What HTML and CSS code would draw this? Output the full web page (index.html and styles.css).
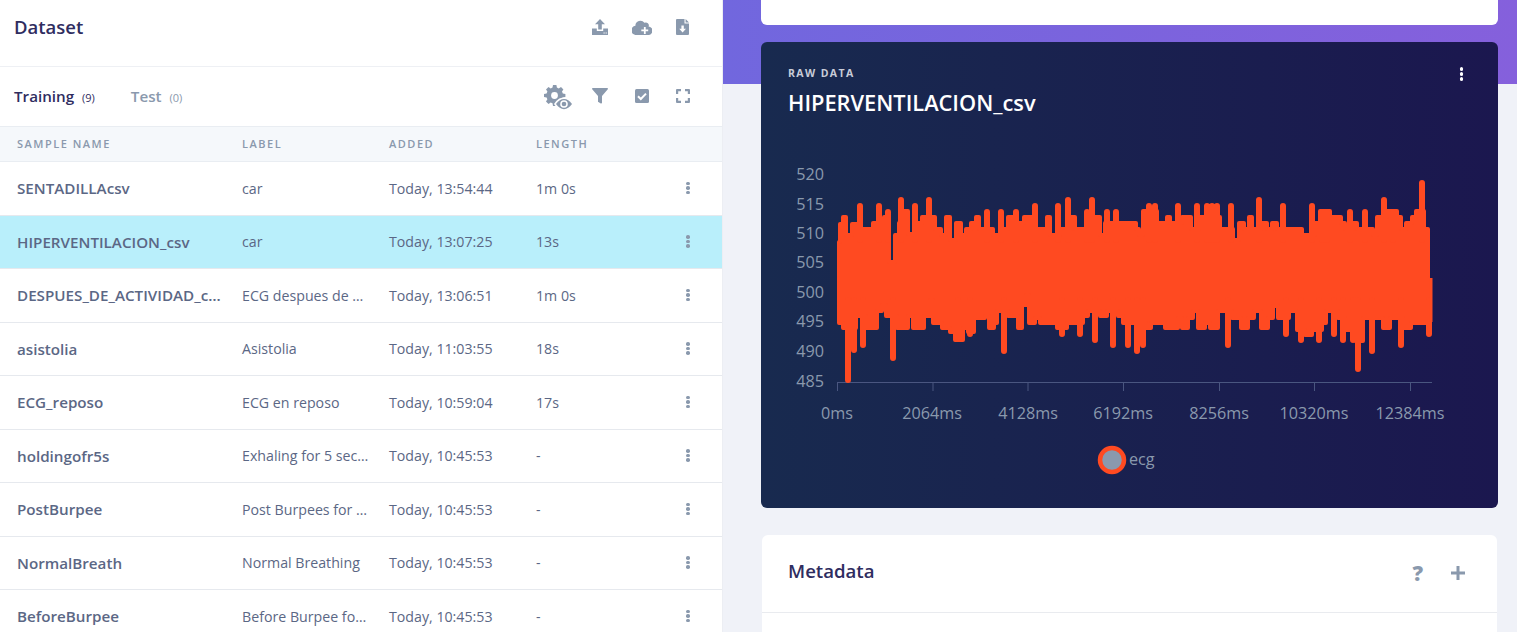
FILE: index.html
```html
<!DOCTYPE html>
<html lang="en">
<head>
    <meta charset="UTF-8">
    <title>Data acquisition</title>
    <link rel="stylesheet" href="styles.css">
</head>
<body>
<div class="page">
    <section class="dataset">
        <header class="dataset_head">
            <h2 class="dataset_title">Dataset</h2>
            <div class="tools">
                <span class="tool"><svg width="16" height="16" viewBox="0 0 16 16"><path d="M8 0l5 5.2H9.8v5.3H6.2V5.2H3zM0 9.5h4.8v2.5h6.4V9.5H16V16H0z"/><path class="hole" d="M11.5 13.6h1.2v.9h-1.2zM13.6 13.6h1.2v.9h-1.2z"/></svg></span>
                <span class="tool"><svg width="20" height="15" viewBox="0 0 20 15"><path d="M16.6 6.6A3 3 0 0 0 12.4 2.8 5 5 0 0 0 3.4 5.8 4.6 4.6 0 0 0 4.6 15h11.4a4.2 4.2 0 0 0 .6-8.4z"/><path class="hole" d="M11.900 7h1.800v2.600h2.500v1.700h-2.500V14h-1.800v-2.700H9.300V9.600h2.600z"/></svg></span>
                <span class="tool"><svg width="14" height="16" viewBox="0 0 14 16"><path d="M1 0h7.500v4.600H13V15a1 1 0 0 1-1 1H1a1 1 0 0 1-1-1V1a1 1 0 0 1 1-1zM9.600 0L13 3.500H9.600z"/><path class="hole" d="M5.400 6.500h2.400v3.300h2.200L6.600 13.400 3.200 9.800h2.200z"/></svg></span>
            </div>
        </header>
        <div class="tabs_row">
            <div class="tabs">
                <span class="tab tab_on">Training <small>(9)</small></span>
                <span class="tab">Test <small>(0)</small></span>
            </div>
            <div class="tools">
                <span class="tool"><svg class="cog_eye" width="30" height="26" viewBox="0 0 30 26"><path d="M8 0h3.400l.5 2.600 1.800.8L16 2l2.400 2.400-1.400 2.200.8 1.800 2.600.5V12l-2.600.5-.8 1.800 1.400 2.200-2.400 2.400-2.200-1.400-1.800.8-.5 2.600H8l-.5-2.600-1.800-.8-2.200 1.400L1 16.500l1.400-2.200-.8-1.800L-1 12V8.900l2.600-.5.8-1.800L1 4.400 3.500 2l2.200 1.400 1.800-.8z" transform="translate(1)"/><circle class="hole" cx="10.500" cy="10.500" r="3.400"/><path class="hole" d="M10 19c3-4.500 6-6.500 10-6.500s7 2 10 6.500c-3 4.500-6 6.800-10 6.800S13 23.500 10 19z"/><path d="M12 19c2.500-3.300 5-5 8-5s5.500 1.700 8 5c-2.500 3.300-5 5.200-8 5.200s-5.500-1.900-8-5.200z"/><circle class="hole" cx="20" cy="19" r="3.800"/><circle cx="20" cy="19" r="2.300"/></svg></span>
                <span class="tool"><svg width="16" height="16" viewBox="0 0 16 16"><path d="M.8 0h14.400c.7 0 1 .8.6 1.300L10 8v6.800c0 .6-.6 1-1.200.7l-2.400-1.400a.8.8 0 0 1-.4-.7V8L.2 1.300C-.2.800.1 0 .8 0z"/></svg></span>
                <span class="tool"><svg width="14" height="14" viewBox="0 0 14 14"><rect width="14" height="14" rx="1.500"/><path class="hole_line" d="M3 7.200l2.800 2.800L11 4.600"/></svg></span>
                <span class="tool"><svg width="14" height="14" viewBox="0 0 14 14"><path d="M0 5V1a1 1 0 0 1 1-1h4v2.200H2.200V5zM9 0h4a1 1 0 0 1 1 1v4h-2.200V2.200H9zM14 9v4a1 1 0 0 1-1 1H9v-2.200h2.800V9zM5 14H1a1 1 0 0 1-1-1V9h2.200v2.800H5z"/></svg></span>
            </div>
        </div>
        <table class="samples">
            <thead>
                <tr><th>Sample name</th><th>Label</th><th>Added</th><th>Length</th><th></th></tr>
            </thead>
            <tbody>
                <tr><td class="name">SENTADILLAcsv</td><td>car</td><td>Today, 13:54:44</td><td>1m 0s</td><td class="more"><i></i><i></i><i></i></td></tr>
                <tr class="selected"><td class="name">HIPERVENTILACION_csv</td><td>car</td><td>Today, 13:07:25</td><td>13s</td><td class="more"><i></i><i></i><i></i></td></tr>
                <tr><td class="name">DESPUES_DE_ACTIVIDAD_csv</td><td>ECG despues de actividad</td><td>Today, 13:06:51</td><td>1m 0s</td><td class="more"><i></i><i></i><i></i></td></tr>
                <tr><td class="name">asistolia</td><td>Asistolia</td><td>Today, 11:03:55</td><td>18s</td><td class="more"><i></i><i></i><i></i></td></tr>
                <tr><td class="name">ECG_reposo</td><td>ECG en reposo</td><td>Today, 10:59:04</td><td>17s</td><td class="more"><i></i><i></i><i></i></td></tr>
                <tr><td class="name">holdingofr5s</td><td>Exhaling for 5 seconds</td><td>Today, 10:45:53</td><td>-</td><td class="more"><i></i><i></i><i></i></td></tr>
                <tr><td class="name">PostBurpee</td><td>Post Burpees for 5 seconds</td><td>Today, 10:45:53</td><td>-</td><td class="more"><i></i><i></i><i></i></td></tr>
                <tr><td class="name">NormalBreath</td><td>Normal Breathing</td><td>Today, 10:45:53</td><td>-</td><td class="more"><i></i><i></i><i></i></td></tr>
                <tr><td class="name">BeforeBurpee</td><td>Before Burpee for 5 seconds</td><td>Today, 10:45:53</td><td>-</td><td class="more"><i></i><i></i><i></i></td></tr>
            </tbody>
        </table>
    </section>
    <main class="detail">
        <div class="card_top"></div>
        <section class="raw">
            <div class="raw_head">
                <div>
                    <div class="raw_kicker">RAW DATA</div>
                    <h2 class="raw_title">HIPERVENTILACION_csv</h2>
                </div>
                <div class="more more_light"><i></i><i></i><i></i></div>
            </div>
            <svg class="chart" width="737" height="350" viewBox="761 145 737 350">
                <g class="y_labels">
                    <text x="824" y="180">520</text>
                    <text x="824" y="210">515</text>
                    <text x="824" y="239">510</text>
                    <text x="824" y="268">505</text>
                    <text x="824" y="298">500</text>
                    <text x="824" y="327">495</text>
                    <text x="824" y="357">490</text>
                    <text x="824" y="387">485</text>
                </g>
                <path class="axis" d="M837 382.500H1432M837.500 382V391M933 382V391M1028 382V391M1123.500 382V391M1219.500 382V391M1314.500 382V391M1410.500 382V391"/>
                <g class="x_labels">
                    <text x="837" y="419">0ms</text>
                    <text x="932" y="419">2064ms</text>
                    <text x="1028" y="419">4128ms</text>
                    <text x="1123" y="419">6192ms</text>
                    <text x="1219" y="419">8256ms</text>
                    <text x="1314" y="419">10320ms</text>
                    <text x="1410" y="419">12384ms</text>
                </g>
                <path class="wave" transform="translate(0 2)" d="M839 280V240H840V222H843V215H846V233H852V222H860V227H873V221H884V215H889V260H895V233H899V221H902V209H908V232H914V221H922V215H935V227H941V233H946V215H950V238H956V221H961V233H966V227H971V221H976V215H979V227H993V233H1002V227H1008V215H1017V221H1024V215H1034V227H1047V215H1050V233H1060V227H1071V215H1075V227H1090V215H1100V233H1105V221H1136V227H1139V233H1143V209H1157V221H1167V215H1170V221H1182V215H1191V227H1199V215H1220V227H1233V238H1239V221H1244V227H1249V215H1252V227H1261V221H1267V227H1272V221H1277V227H1302V233H1315V221H1320V209H1330V215H1341V221H1345V227H1353V221H1357V227H1373V233H1377V215H1387V209H1397V215H1401V227H1406V221H1412V215H1416V209H1424V227H1428V280Z"/>
                <path class="wave" transform="translate(0 -2)" d="M839 280V325H843V330H856V318H866V330H877V313H882V307H886V318H897V330H908V318H913V330H924V318H930V302H933V325H942V330H950V334H955V342H963V330H968V334H974V320H985V318H989V330H994V325H997V313H1008V318H1018V330H1022V307H1026V297H1029V325H1035V320H1040V325H1057V330H1067V325H1083V318H1088V313H1100V318H1107V313H1118V318H1123V325H1146V330H1151V325H1165V330H1178V320H1182V330H1188V320H1193V313H1198V330H1205V325H1210V330H1218V313H1232V320H1241V330H1248V320H1254V313H1261V330H1268V320H1273V308H1278V320H1289V313H1297V332H1305V337H1312V332H1322V325H1326V313H1338V320H1345V332H1356V343H1363V320H1383V330H1390V320H1403V330H1411V325H1428V280Z"/>
                <path class="spikes" d="M860 206V240M879 206V240M888 212V240M901 200V240M915 206V240M929 200V240M987 212V240M1001 212V240M1016 212V240M1035 206V240M1058 206V240M1068 200V240M1087 212V240M1092 200V240M1107 212V240M1116 212V240M1149 206V240M1155 206V240M1178 206V240M1197 206V240M1207 206V240M1212 206V240M1217 206V240M1231 206V240M1259 200V240M1283 206V240M1312 206V240M1322 212V240M1327 212V240M1350 212V240M1365 212V240M1384 200V240M1393 212V240M1422 183V240"/>
                <path class="spikes" d="M848 300V380M854 300V350M863 300V345M893 300V358M958 300V339M970 300V334M1004 300V351M1062 300V334M1080 300V334M1095 300V340M1113 300V345M1128 300V345M1137 300V351M1143 300V345M1228 300V345M1286 300V334M1301 300V340M1319 300V340M1334 300V334M1343 300V340M1353 300V340M1358 300V369M1372 300V351M1401 300V345M1429 300V334"/>
                <path class="spikes_end" d="M1431 278V322"/>
                <circle class="legend_dot" cx="1112" cy="460" r="12"/>
                <text class="legend_text" x="1129" y="465">ecg</text>
            </svg>
        </section>
        <section class="meta">
            <header class="meta_head">
                <h3 class="meta_title">Metadata</h3>
                <div class="meta_tools">
                    <span class="meta_help">?</span>
                    <svg width="14" height="14" viewBox="0 0 14 14" class="meta_plus"><path d="M5.500 0h3v5.500H14v3H8.500V14h-3V8.500H0v-3h5.500z"/></svg>
                </div>
            </header>
        </section>
    </main>
</div>
</body>
</html>
```

FILE: styles.css
```css
* {
    margin: 0;
    padding: 0;
    box-sizing: border-box;
}

html, body {
    height: 100%;
    overflow: hidden;
}

body {
    font-family: "Open Sans", "Liberation Sans", sans-serif;
    color: #2f2d5f;
    background-color: #f0f2f8;
}

.page {
    display: flex;
    height: 632px;
    overflow: hidden;
}

/* left panel */
.dataset {
    width: 723px;
    flex: none;
    overflow: hidden;
    background-color: #fff;
    border-right: 1px solid #eceef3;
}

.dataset_head {
    display: flex;
    justify-content: space-between;
    align-items: center;
    height: 67px;
    padding: 0 18px 12px 14px;
    border-bottom: 1px solid #eef0f4;
}

.dataset_title {
    font-size: 18.5px;
    font-weight: 600;
    line-height: 24px;
}

.tools {
    display: flex;
    align-items: center;
}

.tool {
    display: flex;
    justify-content: center;
    align-items: center;
    width: 41.5px;
    fill: #8a99ad;
}

.hole {
    fill: #fff;
}

.hole_line {
    fill: none;
    stroke: #fff;
    stroke-width: 2;
}

.cog_eye {
    margin-top: 4px;
}

.tabs_row {
    display: flex;
    justify-content: space-between;
    align-items: center;
    height: 59px;
    padding: 0 18px 1px 14px;
}

.tabs {
    display: flex;
    gap: 36px;
}

.tab {
    font-size: 15.2px;
    font-weight: 600;
    color: #8a99ad;
}

.tab small {
    font-size: 11px;
    font-weight: 400;
    margin-left: 4px;
}

.tab_on {
    color: #2f2d5f;
}

/* samples table */
.samples {
    width: 722px;
    table-layout: fixed;
    border-collapse: collapse;
}

.samples th {
    height: 35px;
    padding: 0 0 1px 17px;
    font-size: 11px;
    font-weight: 600;
    letter-spacing: 1.5px;
    text-align: left;
    text-transform: uppercase;
    color: #8a99ad;
    background-color: #f5f8fb;
    border-top: 1px solid #e9edf2;
    border-bottom: 1px solid #e9edf2;
}

.samples th:nth-child(1) { width: 225px; }
.samples th:nth-child(2) { width: 147px; }
.samples th:nth-child(3) { width: 147px; }
.samples th:nth-child(4) { width: 130px; }

.samples td {
    height: 53.5px;
    padding: 0 0 0 17px;
    font-size: 14.2px;
    color: #5b6785;
    white-space: nowrap;
    overflow: hidden;
    text-overflow: ellipsis;
    border-bottom: 1px solid #e6e9ee;
}

.samples td:nth-child(2) {
    padding-right: 2px;
}

.samples td.name {
    font-size: 15.2px;
    font-weight: 600;
    padding-right: 2px;
}

.samples .selected td {
    background-color: #b9effb;
}

.more {
    display: flex;
    flex-direction: column;
    align-items: center;
    gap: 1.5px;
}

.more i {
    display: block;
    width: 3.5px;
    height: 3.5px;
    border-radius: 50%;
    background-color: #8a99ad;
}

.samples td.more {
    display: table-cell;
    padding: 0 0 0 30px;
    line-height: 0;
}

.samples td.more i {
    margin: 0 0 1px 7px;
}

.more_light {
    margin: 1px 1px 0 0;
}

.more_light i {
    background-color: #fff;
}

/* right side */
.detail {
    flex: 1;
    padding: 0 19px 0 38px;
    background-image: linear-gradient(90deg, #7167de, #8560dc);
    background-size: 100% 84px;
    background-repeat: no-repeat;
}

.card_top {
    height: 25px;
    margin-bottom: 17px;
    background-color: #fff;
    border-radius: 0 0 6px 6px;
}

.raw {
    height: 466px;
    overflow: hidden;
    border-radius: 6px;
    background-image: linear-gradient(90deg, #182a4f, #1b174f);
}

.raw_head {
    display: flex;
    justify-content: space-between;
    height: 103px;
    padding: 24px 34px 0 27px;
}

.raw_kicker {
    font-size: 10.5px;
    font-weight: 700;
    line-height: 14px;
    letter-spacing: 1.4px;
    color: #c8ccd8;
}

.raw_title {
    margin-top: 9px;
    font-size: 21.8px;
    font-weight: 600;
    line-height: 28px;
    color: #fff;
}

.chart {
    display: block;
}

.chart text {
    font-family: "Open Sans", "Liberation Sans", sans-serif;
    font-size: 16.2px;
    fill: #8a99ad;
}

.y_labels text {
    text-anchor: end;
}

.x_labels text {
    text-anchor: middle;
}

.axis {
    fill: none;
    stroke: #4a5680;
    stroke-width: 1;
}

.wave {
    fill: #ff4a21;
    stroke: #ff4a21;
    stroke-width: 4;
    stroke-linejoin: round;
}

.spikes {
    fill: none;
    stroke: #ff4a21;
    stroke-width: 6;
    stroke-linecap: round;
}

.spikes_end {
    fill: none;
    stroke: #ff4a21;
    stroke-width: 3;
}

.legend_dot {
    fill: #8a99ad;
    stroke: #ff4a21;
    stroke-width: 4.5;
}

.meta {
    margin: 27px 1px 0;
    height: 97px;
    background-color: #fff;
    border-radius: 6px 6px 0 0;
}

.meta_head {
    display: flex;
    justify-content: space-between;
    align-items: center;
    height: 78px;
    padding: 0 32px 6px 26px;
    border-bottom: 1px solid #e9ebef;
}

.meta_title {
    font-size: 18.6px;
    font-weight: 600;
}

.meta_tools {
    display: flex;
    align-items: center;
    gap: 28px;
    fill: #8a99ad;
    padding-top: 4px;
}

.meta_help {
    font-size: 21px;
    font-weight: 800;
    line-height: 24px;
    color: #8a99ad;
}
```
